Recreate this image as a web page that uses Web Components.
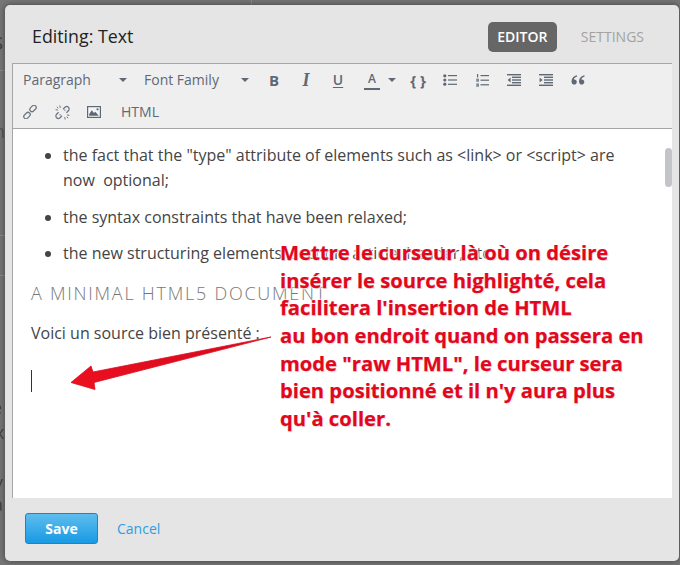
<!DOCTYPE html>
<html lang="fr">
<head>
<meta charset="utf-8">
<title>Editing: Text</title>
<style>
html,body{margin:0;height:100%;overflow:hidden}
body{background:#7a7a7a;font-family:"Open Sans","Liberation Sans",sans-serif;width:680px;height:565px;position:relative}
</style>
</head>
<body>
<x-backdrop></x-backdrop>
<x-modal>
  <x-modal-header title-text="Editing: Text" slot="header"></x-modal-header>
  <x-editor>
    <x-toolbar slot="toolbar"></x-toolbar>
    <x-doc></x-doc>
  </x-editor>
  <x-modal-footer slot="footer"></x-modal-footer>
  <x-annotation slot="over"></x-annotation>
</x-modal>
<script>
function def(name, html, init){
  customElements.define(name, class extends HTMLElement{
    constructor(){super();this.attachShadow({mode:'open'}).innerHTML=html;}
    connectedCallback(){ if(init) init.call(this,this.shadowRoot); }
  });
}
const S='#5f6975';
const ICONS={
  ul:`<svg width="14" height="12" viewBox="0 0 14 12"><g fill="${S}"><circle cx="1.800" cy="1.800" r="1.600"/><circle cx="1.800" cy="6" r="1.600"/><circle cx="1.800" cy="10.200" r="1.600"/><rect x="5" y="1" width="9" height="1.200"/><rect x="5" y="5.400" width="9" height="1.200"/><rect x="5" y="9.700" width="9" height="1.200"/></g></svg>`,
  ol:`<svg width="13" height="13" viewBox="0 0 13 13"><g fill="${S}"><rect x="1" y="0" width="1.200" height="3.400"/><rect x=".2" y="4.600" width="2.800" height="3.200" opacity=".75"/><rect x=".2" y="9.400" width="2.800" height="3.400" opacity=".75"/><rect x="4.500" y="1" width="8.500" height="1.200"/><rect x="4.500" y="5.600" width="8.500" height="1.200"/><rect x="4.500" y="10.200" width="8.500" height="1.200"/></g></svg>`,
  outdent:`<svg width="14" height="12" viewBox="0 0 14 12"><g fill="${S}"><rect y="0" width="14" height="1.400"/><rect x="5" y="2.600" width="9" height="1.400"/><rect x="5" y="5.300" width="9" height="1.400"/><rect x="5" y="8" width="9" height="1.400"/><rect y="10.600" width="14" height="1.400"/><path d="M3.600 3.600v4.800L.6 6z"/></g></svg>`,
  indent:`<svg width="14" height="12" viewBox="0 0 14 12"><g fill="${S}"><rect y="0" width="14" height="1.400"/><rect x="5" y="2.600" width="9" height="1.400"/><rect x="5" y="5.300" width="9" height="1.400"/><rect x="5" y="8" width="9" height="1.400"/><rect y="10.600" width="14" height="1.400"/><path d="M.6 3.600v4.800L3.600 6z"/></g></svg>`,
  quote:`<svg width="14" height="10" viewBox="0 0 14 10"><g fill="${S}"><path d="M5.800.2C3 1 .6 3 .5 6.200.5 8.400 1.700 9.600 3.200 9.600c1.500 0 2.600-1.100 2.600-2.600 0-1.400-1-2.500-2.300-2.500-.3 0-.5 0-.7.100C3 3 4.400 2 6.200 1.400z"/><path d="M13.300.2C10.500 1 8.100 3 8 6.200c0 2.200 1.200 3.400 2.700 3.400 1.500 0 2.600-1.100 2.600-2.600 0-1.400-1-2.500-2.300-2.500-.3 0-.5 0-.7.100.2-1.600 1.600-2.600 3.400-3.200z"/></g></svg>`,
  link:`<svg width="14" height="14" viewBox="0 0 14 14"><g fill="none" stroke="#6d7680" stroke-width="1.250"><rect x="6.400" y="1.200" width="7.200" height="4.400" rx="2.200" transform="rotate(-45 10 3.400)"/><rect x=".4" y="8.400" width="7.200" height="4.400" rx="2.200" transform="rotate(-45 4 10.600)"/></g></svg>`,
  unlink:`<svg width="15" height="15" viewBox="0 0 15 15"><g fill="none" stroke="#6d7680" stroke-width="1.250"><path d="M8 4.300l2-2a2.400 2.400 0 0 1 3.400 3.400l-2 2M9.500 5.500l.8-.8"/><path d="M7 10.700l-2 2a2.400 2.400 0 0 1-3.400-3.400l2-2M5.500 9.500l-.8.8"/><path d="M4.800.5l.5 2.400M.6 4.600l2.400.5M10.200 14.500l-.5-2.400M14.400 10.400l-2.400-.5M1.800 1.800l1.500 1.500M13.200 13.200l-1.500-1.500" stroke-width="1"/></g></svg>`,
  image:`<svg width="14" height="12" viewBox="0 0 14 12"><rect x=".6" y=".6" width="12.800" height="10.800" fill="#f4f4f4" stroke="${S}" stroke-width="1.200"/><path fill="${S}" d="M2.200 9.800V8L4.800 4.200 7 7l1.300-1.200 3.500 4z"/><circle cx="10.500" cy="3.300" r="1.100" fill="${S}"/></svg>`
};

def('x-backdrop',`<style>
:host{position:absolute;inset:0;display:block;overflow:hidden;background:#767676}
i{position:absolute;font:normal 24px "Open Sans",sans-serif;color:#2e2e2e;filter:blur(.7px)}
b{position:absolute;left:0;width:20px;height:1px;background:#888}
u{position:absolute;top:0;height:6px;width:1px;left:251px;background:#888}
</style>
<u></u><b style="top:70px"></b><b style="top:235px"></b><b style="top:275px"></b>
<i style="left:-8px;top:24px;color:#444">s</i>
<i style="left:-10px;top:104px;font-size:18px;color:#555">o</i>
<i style="left:-6px;top:119px;font-size:18px;color:#555">n</i>
<i style="left:-12px;top:155px;color:#111;font-weight:700">c</i>
<i style="left:-8px;top:395px;font-size:18px;color:#444">e</i>
<i style="left:-5px;top:420px;font-size:18px;color:#444">x</i>
<i style="left:-6px;top:470px;font-size:18px;color:#444">y</i>
<i style="left:-7px;top:492px;font-size:18px;color:#444">a</i>`);

def('x-modal',`<style>
:host{position:absolute;left:5px;top:5px;width:674px;height:556px;display:flex;flex-direction:column;background:#e5e5e5;border-radius:5px;box-shadow:0 0 6px rgba(0,0,0,.45);color:#222;overflow:hidden}
</style><slot name="header"></slot><slot></slot><slot name="footer"></slot><slot name="over"></slot>`);

def('x-modal-header',`<style>
:host{display:flex;align-items:flex-start;height:58px;flex:none;padding:17px 35px 0 27px;box-sizing:border-box}
h1{margin:2px auto 0 0;font:400 17.800px/24px "Open Sans",sans-serif;color:#222}
.tab{font:600 14px/30px "Open Sans",sans-serif;height:30px;padding:0 10px;border-radius:5px;color:#a3a3a3}
.on{background:#666;color:#fff;margin-right:24px;width:69px;padding:0;text-align:center}
.off{font-weight:400;padding:0}
</style><h1></h1><span class="tab on">EDITOR</span><span class="tab off">SETTINGS</span>`,
function(r){r.querySelector('h1').textContent=this.getAttribute('title-text')});

def('x-editor',`<style>
:host{display:flex;flex-direction:column;flex:none;height:435px;margin:0 7px;width:660px;position:relative;border-left:1px solid #a6a6a6;box-sizing:border-box}
.bar{position:absolute;right:0;top:85px;width:7px;height:39px;border-radius:4px;background:#c2c4c8}
</style><slot name="toolbar"></slot><slot></slot><div class="bar"></div>`);

def('x-tool',`<style>
:host{display:flex;align-items:center;justify-content:center;width:32px;height:32px;flex:none;color:${S};font:700 15px/1 "Open Sans",sans-serif}
</style><slot></slot>`);

def('x-select',`<style>
:host{display:flex;align-items:center;justify-content:space-between;height:32px;box-sizing:border-box;padding:0 7px 0 10px;flex:none;color:${S};font:400 14px/32px "Open Sans",sans-serif}
span{width:0;height:0;border:4px solid transparent;border-top:4px solid ${S};border-bottom:0}
</style><slot></slot><span></span>`);

def('x-toolbar',`<style>
:host{display:block;flex:none;height:66px;box-sizing:border-box;background:#efefef;border-top:1px solid #a6a6a6;border-bottom:1px solid #a6a6a6;overflow:hidden}
.row{display:flex;height:32px}
.row+.row{padding-left:1px}
.u{text-decoration:underline;text-underline-offset:2px;font-weight:600;font-size:14px}
.i{font:italic 700 18px/1 "Liberation Serif",serif}
.a{width:48px;display:flex;align-items:center;justify-content:flex-start;padding-left:10px;box-sizing:border-box;gap:8px}
.a b{font:600 12px/1 "Open Sans",sans-serif;color:${S};border-bottom:2px solid ${S};padding:0 0 3px;display:block;width:16px;text-align:center;margin-top:3px}
.a span{width:0;height:0;border:4px solid transparent;border-top:4px solid ${S};border-bottom:0}
.html{font:400 14px/32px "Open Sans",sans-serif;color:${S};padding-left:11px}
.brace{font:700 15px/1 "Open Sans",sans-serif}
</style>
<div class="row">
  <x-select style="width:121px">Paragraph</x-select>
  <x-select style="width:124px;padding-right:9px">Font Family</x-select>
  <x-tool>B</x-tool><x-tool class="i">I</x-tool><x-tool class="u">U</x-tool>
  <div class="a"><b>A</b><span></span></div>
  <x-tool class="brace">{ }</x-tool>
  <x-tool>${ICONS.ul}</x-tool><x-tool>${ICONS.ol}</x-tool><x-tool>${ICONS.outdent}</x-tool><x-tool>${ICONS.indent}</x-tool><x-tool>${ICONS.quote}</x-tool>
</div>
<div class="row">
  <x-tool>${ICONS.link}</x-tool><x-tool>${ICONS.unlink}</x-tool><x-tool>${ICONS.image}</x-tool>
  <span class="html">HTML</span>
</div>`);

def('x-doc',`<style>
:host{display:block;flex:1;background:#fff;overflow:hidden;padding:0 0 0 18px;font:400 16px/25px "Open Sans",sans-serif;color:#444;position:relative}
ul{margin:14px 0 0;padding:0 0 0 32px}
li{margin:0 0 12px;width:575px}
li:nth-child(2){margin-bottom:10.500px}
h2{font:300 18px/24px "Open Sans",sans-serif;letter-spacing:1.750px;color:#777;margin:15px 0 16px;text-transform:uppercase;white-space:nowrap}
p{margin:0}
.caret{display:block;width:1px;height:22px;background:#333;margin-top:24px}
</style>
<ul>
<li>the fact that the "type" attribute of elements such as &lt;link&gt; or &lt;script&gt; are<br>now&nbsp; optional;</li>
<li>the syntax constraints that have been relaxed;</li>
<li>the new structuring elements: section, article, header, etc.</li>
</ul>
<h2>A minimal HTML5 document</h2>
<p>Voici un source bien présenté :</p>
<span class="caret"></span>`);

def('x-modal-footer',`<style>
:host{display:flex;align-items:center;flex:1;gap:19px;padding:0 0 2px 20px;box-sizing:border-box}
button{width:73px;height:31px;box-sizing:border-box;border:1px solid #1b86c4;border-radius:3px;background:linear-gradient(#5fbdee,#189ae4);color:#fff;font:700 14px/1 "Open Sans",sans-serif;padding:0}
a{color:#2a9fe2;font:400 14px/1 "Open Sans",sans-serif;text-decoration:none}
</style><button type="button">Save</button><a href="#">Cancel</a>`);

def('x-annotation',`<style>
:host{position:absolute;left:0;top:0;width:100%;height:100%;display:block;pointer-events:none}
svg{position:absolute;left:-5px;top:-5px}
div{position:absolute;left:275px;top:234px;white-space:nowrap;font:700 20.200px/27.670px "Open Sans",sans-serif;color:#e1071c;-webkit-text-stroke:.25px #e1071c;text-shadow:0 0 1px #fff,0 0 2px #fff,0 0 3px #fff,0 0 3px #fff,1px 1px 1px #ccc}
</style>
<svg width="680" height="565" viewBox="0 0 680 565"><defs><linearGradient id="g" x1="0" y1="1" x2="1" y2="0"><stop offset="0" stop-color="#ee1020"/><stop offset="1" stop-color="#d00a1c"/></linearGradient></defs>
<path fill="url(#g)" stroke="#e1071c" stroke-width=".8" stroke-linejoin="round" d="M271 337 L93 372 L91 366 L71 382.500 L95 389.500 L94 382.500 Z"/></svg>
<div>Mettre le curseur là où on désire<br>insérer le source highlighté, cela<br>facilitera l'insertion de HTML<br>au bon endroit quand on passera en<br>mode "raw HTML", le curseur sera<br>bien positionné et il n'y aura plus<br>qu'à coller.</div>`);
</script>
</body>
</html>
